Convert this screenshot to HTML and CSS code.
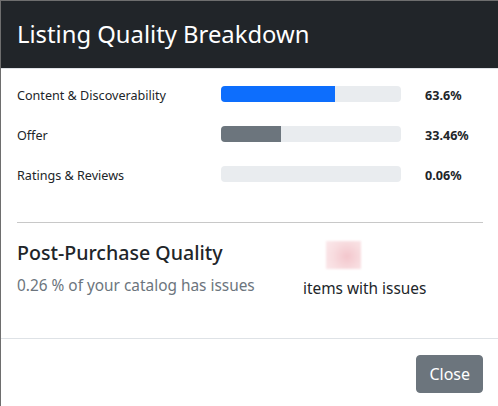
FILE: index.html
```html
<!DOCTYPE html>
<html>
<head>
<meta charset="utf-8">
<link rel="stylesheet" href="styles.css">
</head>
<body>
<div class="modal">
  <div class="modal-header">
    <h5 class="modal-title">Listing Quality Breakdown</h5>
  </div>
  <div class="modal-body">
    <div class="rows">
      <div class="row">
        <span class="label">Content &amp; Discoverability</span>
        <div class="track"><div class="fill blue" style="width:63.6%"></div></div>
        <span class="pct">63.6%</span>
      </div>
      <div class="row">
        <span class="label">Offer</span>
        <div class="track"><div class="fill gray" style="width:33.46%"></div></div>
        <span class="pct">33.46%</span>
      </div>
      <div class="row">
        <span class="label">Ratings &amp; Reviews</span>
        <div class="track"><div class="fill gray" style="width:0%"></div></div>
        <span class="pct">0.06%</span>
      </div>
    </div>
    <hr class="divider">
    <div class="ppq">
      <div class="ppq-left">
        <h4 class="ppq-title">Post-Purchase Quality</h4>
        <p class="ppq-sub">0.26 % of your catalog has issues</p>
      </div>
      <div class="ppq-right">
        <div class="blurred"></div>
        <div class="items">items with issues</div>
      </div>
    </div>
  </div>
  <div class="modal-footer">
    <button class="btn">Close</button>
  </div>
</div>
</body>
</html>
```
FILE: styles.css
```css
html, body {
  margin: 0;
  padding: 0;
  background: #fff;
  overflow: hidden;
}
body {
  font-family: "Noto Sans", "Open Sans", sans-serif;
  color: #212529;
}
.modal {
  width: 498px;
  border: 1px solid #6e6e6e;
  border-right: none;
  background: #fff;
}
.modal-header {
  background: #212529;
  padding: 16px 16px;
  height: 35px;
  display: flex;
  align-items: center;
  border-bottom: 1px solid #dee2e6;
}
.modal-title {
  margin: 0;
  color: #fff;
  font-size: 23.8px;
  font-weight: 400;
  line-height: 1.2;
}
.modal-body {
  padding: 17px 16px 0 16px;
  height: 252px;
}
.rows {
  display: flex;
  flex-direction: column;
  gap: 20px;
}
.row {
  display: flex;
  align-items: flex-start;
  height: 20px;
}
.label {
  width: 204px;
  font-size: 12.6px;
  line-height: 20px;
}
.track {
  width: 180px;
  height: 16px;
  background: #e9ecef;
  border-radius: 4px;
  overflow: hidden;
}
.fill {
  height: 100%;
}
.fill.blue { background: #0d6efd; }
.fill.gray { background: #6c757d; }
.pct {
  margin-left: 24px;
  font-size: 12.6px;
  font-weight: 700;
  line-height: 20px;
}
.divider {
  margin: 36px 0 0 0;
  border: none;
  border-top: 1px solid #c8c8c8;
  width: 466px;
}
.ppq {
  display: flex;
  margin-top: 16px;
}
.ppq-left {
  width: 286px;
}
.ppq-title {
  margin: 0;
  font-size: 19.6px;
  font-weight: 500;
  line-height: 28px;
}
.ppq-sub {
  margin: 8px 0 0 0;
  color: #6c757d;
  font-size: 15.4px;
  line-height: 22px;
}
.ppq-right {
  display: flex;
  flex-direction: column;
}
.blurred {
  width: 35px;
  height: 28px;
  margin: 2px 0 0 23px;
  background: radial-gradient(circle at 60% 55%, #f3c6cc 0%, #f8dde0 55%, #fbe9eb 100%);
  filter: blur(1px);
}
.items {
  margin-top: 9px;
  font-size: 15.4px;
  line-height: 22px;
}
.modal-footer {
  border-top: 1px solid #dee2e6;
  padding: 12px;
  display: flex;
  justify-content: flex-end;
}
.btn {
  margin: 4px;
  font-family: inherit;
  font-size: 16px;
  line-height: 24px;
  padding: 6px 12px;
  color: #fff;
  background: #6c757d;
  border: 1px solid #6c757d;
  border-radius: 4px;
}
```
